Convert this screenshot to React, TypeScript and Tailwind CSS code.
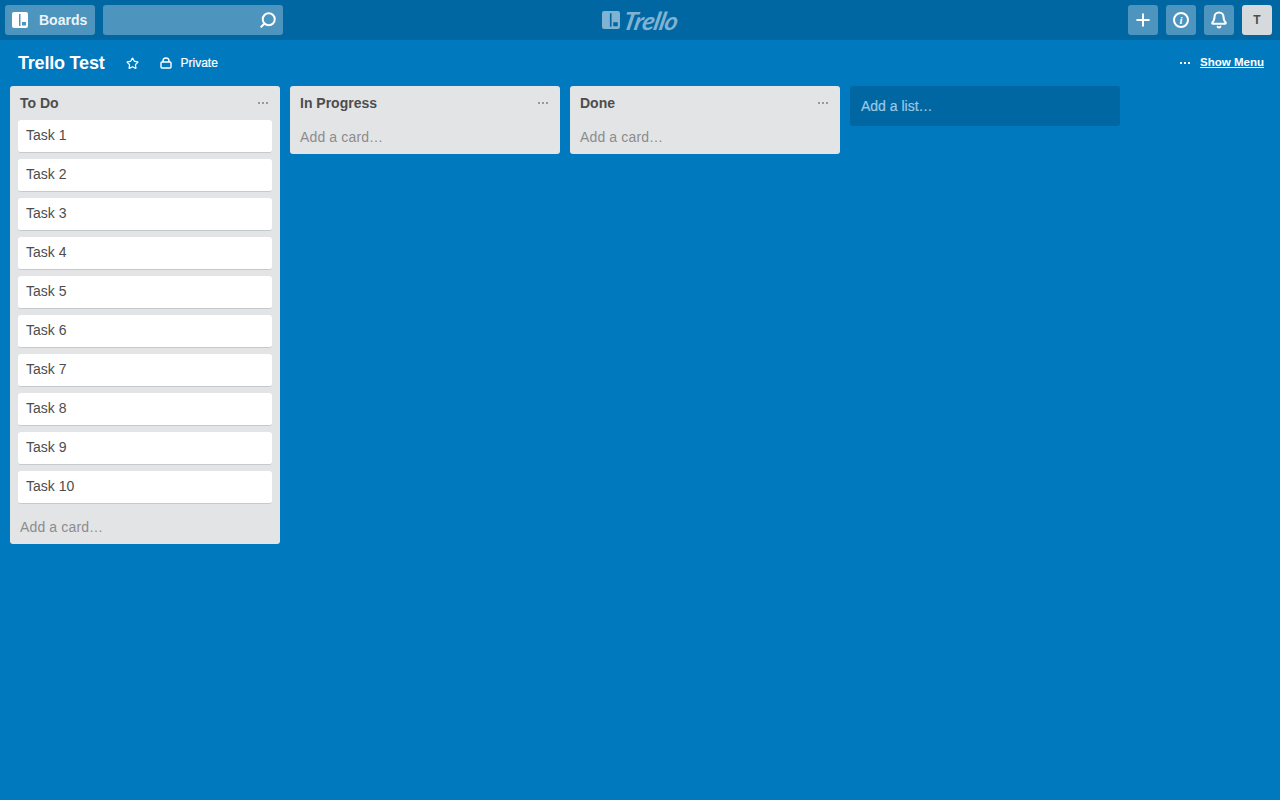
import { Plus, Bell, Star, Search } from 'lucide-react'

const TASKS = ['Task 1', 'Task 2', 'Task 3', 'Task 4', 'Task 5', 'Task 6', 'Task 7', 'Task 8', 'Task 9', 'Task 10']

const LISTS = [
  { name: 'To Do', cards: TASKS },
  { name: 'In Progress', cards: [] as string[] },
  { name: 'Done', cards: [] as string[] },
]

function BoardsGlyph({ className }: { className: string }) {
  return (
    <svg viewBox="0 0 16 16" className={className}>
      <path
        fill="currentColor"
        fillRule="evenodd"
        d="M2 0h12a2 2 0 0 1 2 2v12a2 2 0 0 1-2 2H2a2 2 0 0 1-2-2V2a2 2 0 0 1 2-2zM7 2v12h1.5V2zM10 10v3.5h4V10z"
      />
    </svg>
  )
}

function Dots({ className }: { className: string }) {
  return (
    <span className={`flex gap-[2px] ${className}`}>
      <span className="w-[2px] h-[2px] bg-current" />
      <span className="w-[2px] h-[2px] bg-current" />
      <span className="w-[2px] h-[2px] bg-current" />
    </span>
  )
}

function BoardList({ name, cards }: { name: string; cards: string[] }) {
  return (
    <div className="w-[270px] shrink-0 bg-[#e2e4e6] rounded-[3px] px-2">
      <div className="flex items-center justify-between h-[34px] pl-[2px] pr-[4px]">
        <h2 className="text-[14px] font-bold text-[#4d4d4d]">{name}</h2>
        <Dots className="text-[#999999]" />
      </div>
      <div className="flex flex-col gap-[6px]">
        {cards.map((c) => (
          <div key={c} className="h-[33px] bg-white rounded-[3px] border-b border-[#c4c9cc] pl-2 pt-[5px] text-[14px] leading-[20px] text-[#4d4d4d]">
            {c}
          </div>
        ))}
      </div>
      <div className={`pl-[2px] text-[14px] leading-[20px] tracking-[0.01em] text-[#8c8c8c] pb-[7px] ${cards.length ? 'pt-[13px]' : 'pt-[7px]'}`}>
        Add a card…
      </div>
    </div>
  )
}

export default function App() {
  return (
    <div className="w-full h-[800px] overflow-hidden bg-[#0079bf] font-['Liberation_Sans',Arial,sans-serif]">
      {/* Top bar */}
      <header className="relative h-[40px] bg-[#0067a3] pl-[5px] pr-[8px] flex items-center">
        <button className="flex items-center w-[90px] h-[30px] rounded-[3px] bg-[#4d95bf] pl-[7px] text-white">
          <BoardsGlyph className="w-4 h-4" />
          <span className="ml-[11px] text-[14px] font-bold opacity-90">Boards</span>
        </button>
        <div className="ml-2 w-[180px] h-[30px] rounded-[3px] bg-[#4d95bf] flex items-center justify-end pr-[6px] text-white">
          <Search className="w-[18px] h-[18px] -scale-x-100" strokeWidth={2.6} />
        </div>

        {/* Logo */}
        <div className="absolute left-[602px] top-[10px] flex items-center text-[#80b3d1]">
          <BoardsGlyph className="w-[18px] h-[18px]" />
          <span className="ml-[4px] w-[54px] font-['Lato',sans-serif] italic font-bold text-[25px] leading-[20px] tracking-[-0.6px] -skew-x-12">Trello</span>
        </div>

        <div className="ml-auto flex items-center gap-[8px] text-white">
          <button className="w-[30px] h-[30px] rounded-[3px] bg-[#4d95bf] flex items-center justify-center">
            <Plus className="w-[20px] h-[20px]" strokeWidth={2.4} />
          </button>
          <button className="w-[30px] h-[30px] rounded-[3px] bg-[#4d95bf] flex items-center justify-center">
            <span className="w-[16px] h-[16px] rounded-full border-2 border-white flex items-center justify-center text-[11px] font-bold italic leading-none font-['Liberation_Serif',serif]">i</span>
          </button>
          <button className="w-[30px] h-[30px] rounded-[3px] bg-[#4d95bf] flex items-center justify-center">
            <Bell className="w-[18px] h-[18px]" strokeWidth={2.8} />
          </button>
          <div className="w-[30px] h-[30px] rounded-[3px] bg-[#d6dadc] flex items-center justify-center text-[12px] font-bold text-[#4d4d4d]">
            T
          </div>
        </div>
      </header>

      {/* Board title row */}
      <div className="h-[46px] flex items-center pl-[18px] pr-4 text-white">
        <h1 className="text-[18px] font-bold leading-[24px] tracking-[-0.2px]">Trello Test</h1>
        <Star className="ml-[21px] w-[13px] h-[13px]" strokeWidth={2.2} />
        <svg viewBox="0 0 12 12" className="ml-[21px] w-[12px] h-[12px]" fill="none" stroke="currentColor" strokeWidth="1.4">
          <rect x="1" y="5" width="10" height="6" rx="1" />
          <path d="M3 5V4a3 3 0 0 1 6 0v1" />
        </svg>
        <span className="ml-[9px] text-[12px] font-normal [-webkit-text-stroke:0.2px_white]">Private</span>
        <div className="ml-auto flex items-center">
          <Dots className="text-white" />
          <a className="ml-[10px] text-[11.5px] font-bold underline">Show Menu</a>
        </div>
      </div>

      {/* Lists */}
      <main className="flex items-start gap-[10px] px-[10px]">
        {LISTS.map((l) => (
          <BoardList key={l.name} name={l.name} cards={l.cards} />
        ))}
        <div className="w-[270px] shrink-0 h-[40px] rounded-[3px] bg-[#0067a3] pl-[11px] pt-[10px] text-[14px] leading-[20px] text-[#9cc9e5] [-webkit-text-stroke:0.2px_#9cc9e5]">
          Add a list…
        </div>
      </main>
    </div>
  )
}
